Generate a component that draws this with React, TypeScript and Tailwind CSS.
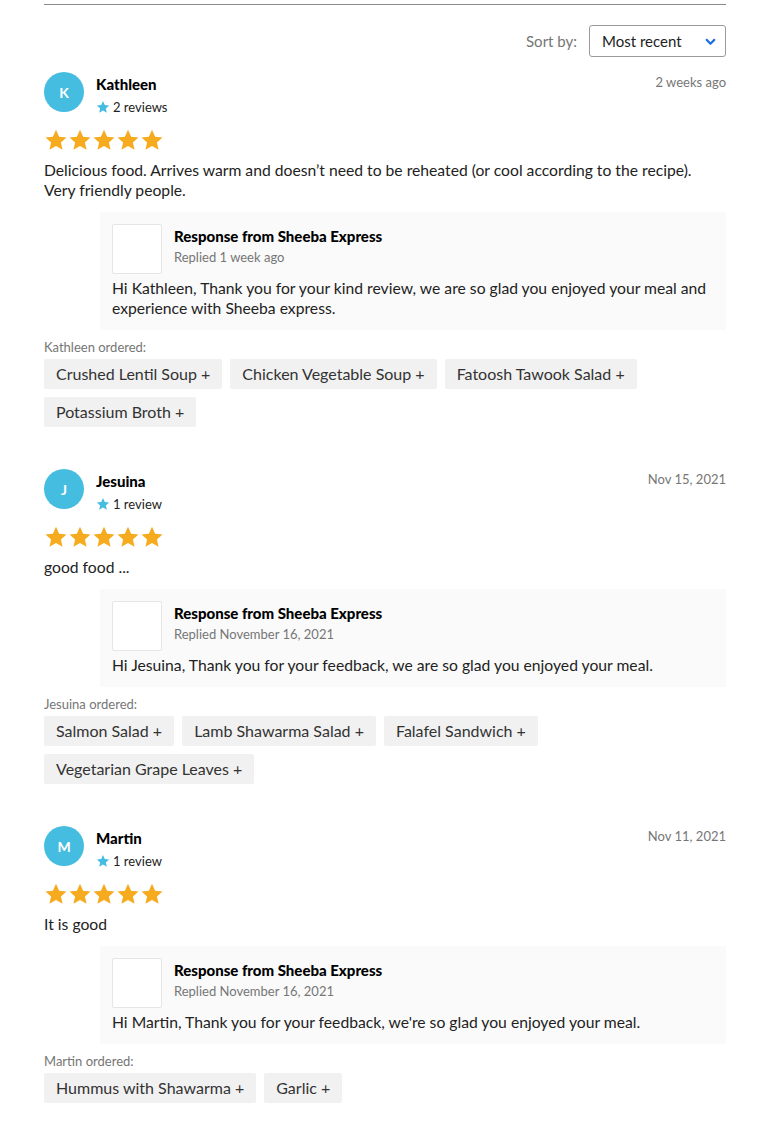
import React from "react";

type Review = {
  name: string;
  initial: string;
  count: string;
  date: string;
  text: string;
  replied: string;
  reply: string;
  items: string[];
};

const reviews: Review[] = [
  {
    name: "Kathleen",
    initial: "K",
    count: "2 reviews",
    date: "2 weeks ago",
    text: "Delicious food. Arrives warm and doesn’t need to be reheated (or cool according to the recipe). Very friendly people.",
    replied: "Replied 1 week ago",
    reply:
      "Hi Kathleen, Thank you for your kind review, we are so glad you enjoyed your meal and experience with Sheeba express.",
    items: ["Crushed Lentil Soup", "Chicken Vegetable Soup", "Fatoosh Tawook Salad", "Potassium Broth"],
  },
  {
    name: "Jesuina",
    initial: "J",
    count: "1 review",
    date: "Nov 15, 2021",
    text: "good food ...",
    replied: "Replied November 16, 2021",
    reply: "Hi Jesuina, Thank you for your feedback, we are so glad you enjoyed your meal.",
    items: ["Salmon Salad", "Lamb Shawarma Salad", "Falafel Sandwich", "Vegetarian Grape Leaves"],
  },
  {
    name: "Martin",
    initial: "M",
    count: "1 review",
    date: "Nov 11, 2021",
    text: "It is good",
    replied: "Replied November 16, 2021",
    reply: "Hi Martin, Thank you for your feedback, we're so glad you enjoyed your meal.",
    items: ["Hummus with Shawarma", "Garlic"],
  },
];

const Star = ({ size, color }: { size: number; color: string }) => (
  <svg width={size} height={size} viewBox="0 0 24 24">
    <path
      d="M12 1.8l3.1 6.9 7.4.7-5.6 5 1.7 7.4L12 17.9l-6.6 3.9 1.7-7.4-5.6-5 7.4-.7z"
      fill={color}
    />
  </svg>
);

function ReviewCard({ r }: { r: Review }) {
  return (
    <div className="flex flex-col">
      <div className="flex items-start justify-between">
        <div className="flex items-start gap-3">
          <div className="w-10 h-10 rounded-full bg-[#45bde0] flex items-center justify-center text-white text-[14px] font-bold">
            {r.initial}
          </div>
          <div className="flex flex-col">
            <div className="text-[15px] font-black text-black leading-[24px]">{r.name}</div>
            <div className="flex items-center gap-[3px] text-[13px] text-[#222] leading-[22px]">
              <Star size={14} color="#45bde0" />
              <span>{r.count}</span>
            </div>
          </div>
        </div>
        <div className="text-[13px] text-[#767676] leading-[20px]">{r.date}</div>
      </div>
      <div className="flex mt-[10px] h-6">
        {[0, 1, 2, 3, 4].map((i) => (
          <Star key={i} size={24} color="#f6ab1f" />
        ))}
      </div>
      <p className="mt-2 text-[15.7px] leading-[20px] text-[#222]">{r.text}</p>
      <div className="mt-3 ml-14 bg-[#fafafa] p-3 flex flex-col">
        <div className="flex gap-3">
          <div className="w-[50px] h-[50px] bg-white border border-[#e6e6e6] rounded-[2px]" />
          <div className="flex flex-col">
            <div className="text-[15px] font-black text-black leading-[24px]">Response from Sheeba Express</div>
            <div className="text-[13px] text-[#767676] leading-[18px]">{r.replied}</div>
          </div>
        </div>
        <p className="mt-1 text-[15.7px] leading-[20px] text-[#222]">{r.reply}</p>
      </div>
      <div className="mt-[10px] text-[13px] text-[#767676] leading-[14px]">{r.name} ordered:</div>
      <div className="mt-[5px] flex flex-wrap gap-2">
        {r.items.map((it) => (
          <div key={it} className="h-[30px] px-3 bg-[#f1f1f1] rounded-[2px] flex items-center text-[16px] text-[#333]">
            {it} +
          </div>
        ))}
      </div>
    </div>
  );
}

export default function App() {
  return (
    <div className="bg-white min-h-[1143px] px-11 pt-1" style={{ fontFamily: "Lato, 'Noto Sans', sans-serif" }}>
      <div className="border-t border-[#8a8a8a]" />
      <div className="flex justify-end items-center mt-5 gap-3">
        <span className="text-[15px] text-[#767676]">Sort by:</span>
        <div className="w-[137px] h-8 border border-[#9a9a9a] rounded-[3px] flex items-center justify-between pl-3 pr-2">
          <span className="text-[15px] text-[#222]">Most recent</span>
          <svg width="13" height="13" viewBox="0 0 24 24" fill="none" stroke="#1f6fe0" strokeWidth="4" strokeLinecap="round" strokeLinejoin="round">
            <path d="M5 9l7 7 7-7" />
          </svg>
        </div>
      </div>
      <div className="mt-[15px] flex flex-col gap-[42px]">
        {reviews.map((r) => (
          <ReviewCard key={r.name} r={r} />
        ))}
      </div>
    </div>
  );
}
